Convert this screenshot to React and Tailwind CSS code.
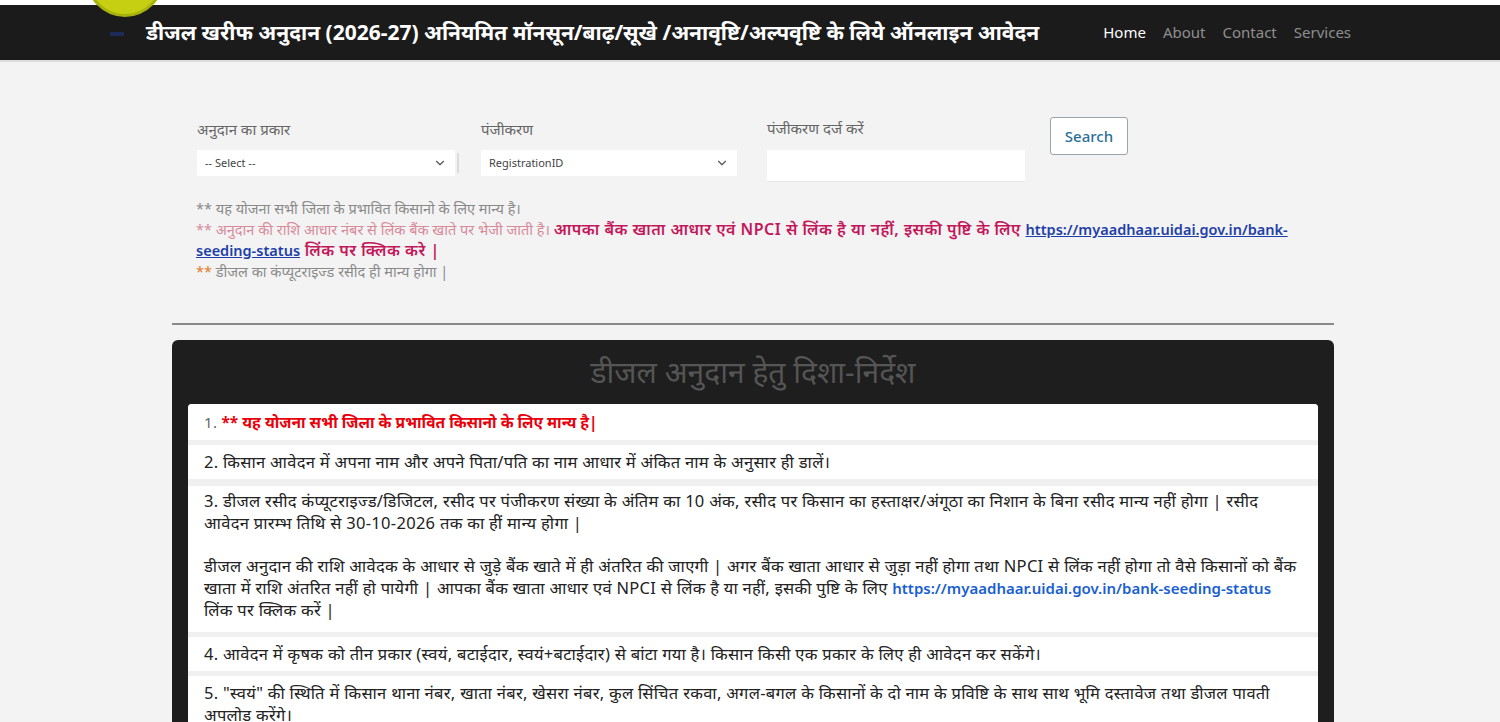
import { ChevronDown } from 'lucide-react'

const font = { fontFamily: '"Noto Sans", "Noto Sans Devanagari", Lato, sans-serif' }

function Header() {
  return (
    <div className="relative bg-white pt-[5px]">
      <div className="absolute left-[86px] -top-[61px] w-[78px] h-[78px] rounded-full bg-[#c6cf12] border-[3px] border-[#a8b20e] z-10" />
      <div className="h-[55px] bg-[#1b1b1b] flex items-center">
        <div className="ml-[110px] mt-[2px] w-[14px] h-[4px] bg-[#1e2a5a]" />
        <h1 className="ml-[22px] text-white text-[21px] font-bold whitespace-nowrap">
          डीजल खरीफ अनुदान (2026-27) अनियमित मॉनसून/बाढ़/सूखे /अनावृष्टि/अल्पवृष्टि के लिये ऑनलाइन आवेदन
        </h1>
        <nav className="ml-[64px] flex items-center gap-[17px] text-[15px]">
          <a className="text-white">Home</a>
          <a className="text-[#8f8f8f]">About</a>
          <a className="text-[#8f8f8f]">Contact</a>
          <a className="text-[#8f8f8f]">Services</a>
        </nav>
      </div>
      <div className="h-[2px] bg-[#dcdcdc]" />
    </div>
  )
}

function SelectBox({ value }) {
  return (
    <div className="h-[26px] bg-white flex items-center justify-between px-[8px] text-[11px] text-[#444]">
      <span>{value}</span>
      <ChevronDown size={14} className="text-[#555]" strokeWidth={2} />
    </div>
  )
}

function SearchForm() {
  return (
    <div className="ml-[197px] mt-[55px] flex items-start">
      <div className="w-[258px]">
        <div className="text-[15px] text-[#666] h-[33px] pt-[1px]">अनुदान का प्रकार</div>
        <SelectBox value="-- Select --" />
      </div>
      <div className="w-[2px] h-[20px] bg-[#dcdcdc] mt-[36px] ml-[2px]" />
      <div className="w-[256px] ml-[22px]">
        <div className="text-[15px] text-[#666] h-[33px] pt-[1px]">पंजीकरण</div>
        <SelectBox value="RegistrationID" />
      </div>
      <div className="w-[258px] ml-[30px]">
        <div className="text-[15px] text-[#666] h-[33px]">पंजीकरण दर्ज करें</div>
        <div className="h-[32px] bg-white border-b border-[#e6e6e6]" />
      </div>
      <button className="ml-[25px] w-[78px] h-[38px] border border-[#9aa4ad] rounded-[3px] bg-white text-[15px] text-[#2a6f97] font-medium">
        Search
      </button>
    </div>
  )
}

function Notes() {
  return (
    <div className="ml-[196px] mt-[16px] w-[1094px] text-[14.5px] leading-[21px]">
      <div className="text-[#8a8a8a]">** यह योजना सभी जिला के प्रभावित किसानो के लिए मान्य है।</div>
      <div>
        <span className="text-[#d88a9a]">** अनुदान की राशि आधार नंबर से लिंक बैंक खाते पर भेजी जाती है। </span>
        <span className="text-[#c2185b] font-semibold text-[16px] tracking-[0.5px]">आपका बैंक खाता आधार एवं NPCI से लिंक है या नहीं, इसकी पुष्टि के लिए </span>
        <a className="text-[#1f3fa8] font-semibold underline text-[14.5px]">https://myaadhaar.uidai.gov.in/bank-seeding-status</a>
        <span className="text-[#c2185b] font-semibold text-[16px] tracking-[0.5px]"> लिंक पर क्लिक करे |</span>
      </div>
      <div className="text-[#8a8a8a]">
        <span className="text-[#e07b2a]">**</span> डीजल का कंप्यूटराइज्ड रसीद ही मान्य होगा |
      </div>
    </div>
  )
}

function Row({ children, className = '' }) {
  return (
    <div className={`bg-white px-[16px] py-[6px] text-[16.5px] tracking-[0.3px] leading-[22px] text-[#222] ${className}`}>{children}</div>
  )
}

function Guidelines() {
  return (
    <div className="ml-[172px] w-[1162px] mt-[15px] bg-[#1e1e1e] rounded-t-[6px] px-[16px] pb-[10px]">
      <h2 className="text-center text-[30px] text-[#555] h-[64px] leading-[64px]">डीजल अनुदान हेतु दिशा-निर्देश</h2>
      <div className="bg-[#f0f0f0] rounded-t-[4px] flex flex-col gap-[5px]">
        <Row className="py-[7px] rounded-t-[4px]">
          <span className="text-[#666] text-[15px]">1. </span>
          <span className="text-[#e8000b] font-bold text-[15.5px] tracking-normal">** यह योजना सभी जिला के प्रभावित किसानो के लिए मान्य है|</span>
        </Row>
        <Row>2. किसान आवेदन में अपना नाम और अपने पिता/पति का नाम आधार में अंकित नाम के अनुसार ही डालें।</Row>
        <Row className="mt-[2px] pt-[4px] pb-[11px]">
          <p>3. डीजल रसीद कंप्यूटराइज्ड/डिजिटल, रसीद पर पंजीकरण संख्या के अंतिम का 10 अंक, रसीद पर किसान का हस्ताक्षर/अंगूठा का निशान के बिना रसीद मान्य नहीं होगा | रसीद आवेदन प्रारम्भ तिथि से 30-10-2026 तक का हीं मान्य होगा |</p>
          <p className="mt-[21px]">
            डीजल अनुदान की राशि आवेदक के आधार से जुड़े बैंक खाते में ही अंतरित की जाएगी | अगर बैंक खाता आधार से जुड़ा नहीं होगा तथा NPCI से लिंक नहीं होगा तो वैसे किसानों को बैंक खाता में राशि अंतरित नहीं हो पायेगी | आपका बैंक खाता आधार एवं NPCI से लिंक है या नहीं, इसकी पुष्टि के लिए{' '}
            <a className="text-[#1a5fd0] font-semibold text-[15px] tracking-normal">https://myaadhaar.uidai.gov.in/bank-seeding-status</a> लिंक पर क्लिक करें |
          </p>
        </Row>
        <Row className="py-[4px]">4. आवेदन में कृषक को तीन प्रकार (स्वयं, बटाईदार, स्वयं+बटाईदार) से बांटा गया है। किसान किसी एक प्रकार के लिए ही आवेदन कर सकेंगे।</Row>
        <Row>5. "स्वयं" की स्थिति में किसान थाना नंबर, खाता नंबर, खेसरा नंबर, कुल सिंचित रकवा, अगल-बगल के किसानों के दो नाम के प्रविष्टि के साथ साथ भूमि दस्तावेज तथा डीजल पावती अपलोड करेंगे।</Row>
      </div>
    </div>
  )
}

export default function App() {
  return (
    <div className="min-h-[722px] bg-[#f3f3f3] overflow-hidden" style={font}>
      <Header />
      <SearchForm />
      <Notes />
      <div className="ml-[172px] w-[1162px] mt-[41px] h-[2px] bg-[#8a8a8a]" />
      <Guidelines />
    </div>
  )
}
